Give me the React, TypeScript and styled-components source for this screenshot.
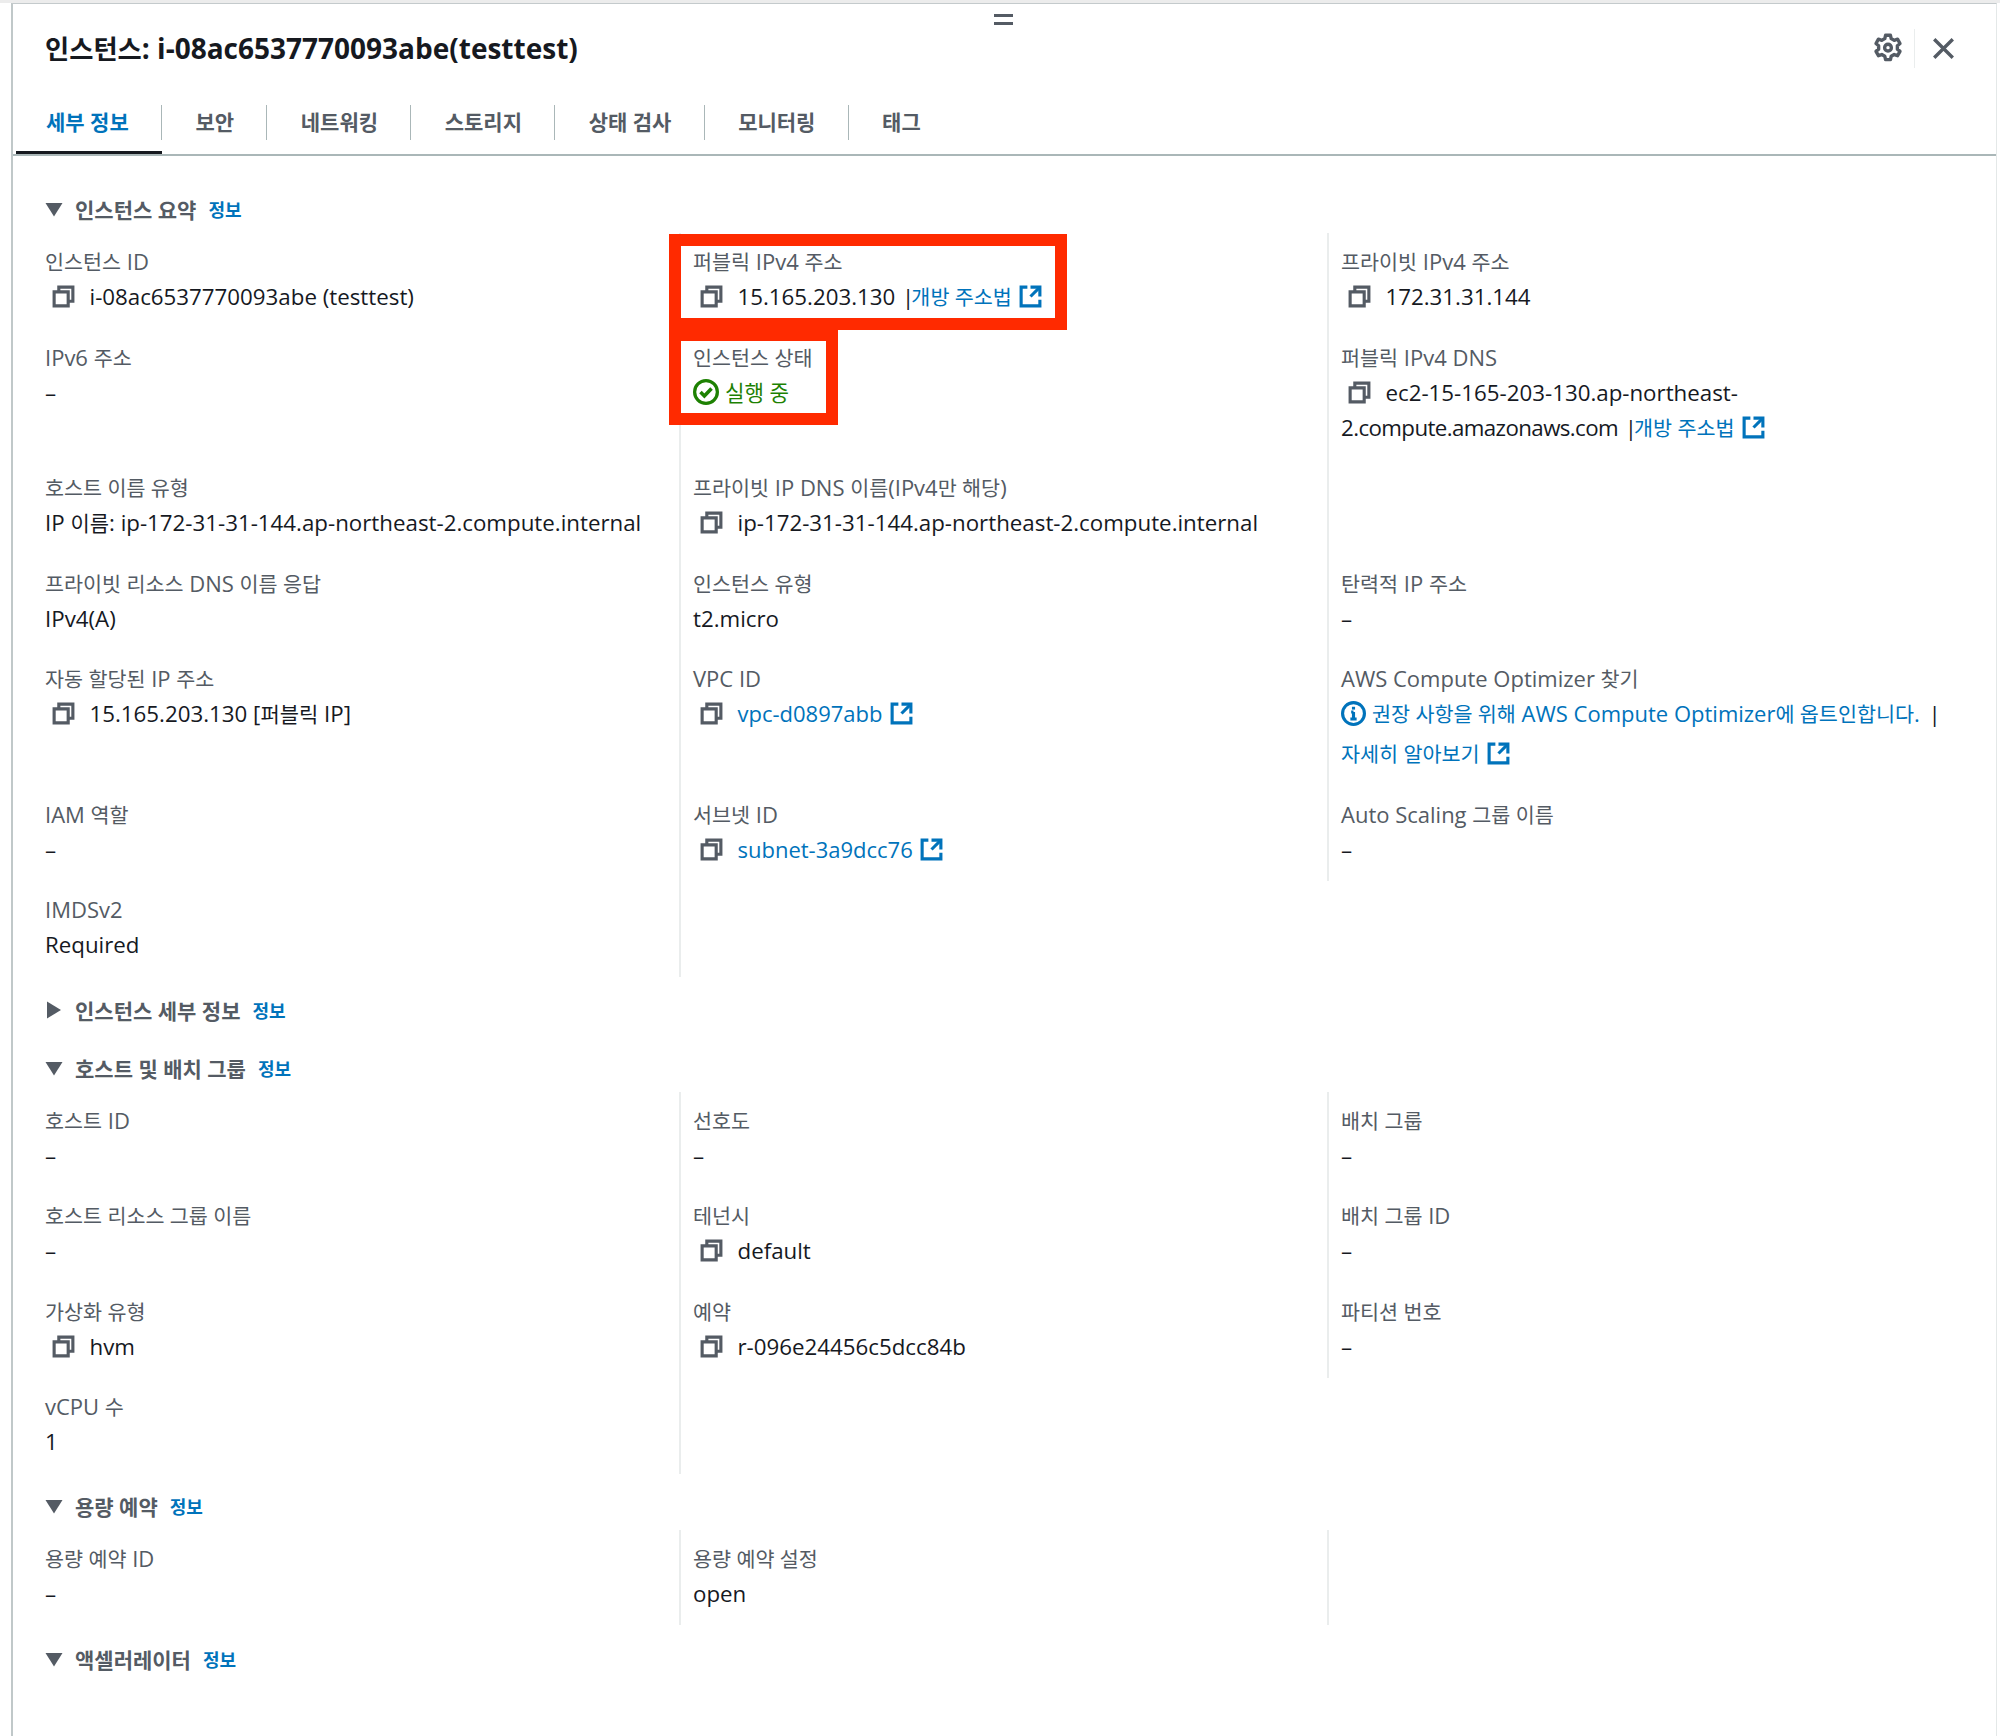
import React from 'react';
import styled, { createGlobalStyle } from 'styled-components';

const Global = createGlobalStyle`
  html, body { margin: 0; padding: 0; background: #fff; }
  body { font-family: "Open Sans", "Noto Sans CJK KR", sans-serif; color: #16191f; }
`;

const Page = styled.div`
  width: 2000px;
  height: 1736px;
  overflow: hidden;
  box-sizing: border-box;
  border-top: 3px solid #ececec;
  background: #fff;
`;
const Panel = styled.div`
  position: relative;
  margin: 0 3px 0 11px;
  height: 1733px;
  box-sizing: border-box;
  border-left: 2px solid #c0c8c9;
  border-right: 1px solid #e4e8e8;
  border-top: 1px solid #c4cacc;
  background: #fff;
`;
const DragHandle = styled.div`
  position: absolute;
  left: 981px;
  top: 10px;
  width: 19px;
  height: 11px;
  box-sizing: border-box;
  border-top: 3px solid #545b64;
  border-bottom: 3px solid #545b64;
`;
const Header = styled.header`
  display: flex;
  align-items: center;
  box-sizing: border-box;
  height: 89px;
  padding: 0 39px 1px 32px;
`;
const Title = styled.h1`
  flex: 1;
  margin: 0;
  font-size: 28px;
  font-weight: 700;
  color: #16191f;
`;
const HeaderActions = styled.div`
  display: flex;
  align-items: center;
`;
const GearButton = styled.div`
  display: flex;
  align-items: center;
  height: 39px;
  padding-right: 11px;
  border-right: 1px solid #eaeded;
`;
const CloseButton = styled.div`
  display: flex;
  margin-left: 15px;
`;
const Tabs = styled.nav`
  display: flex;
  height: 63px;
  box-sizing: border-box;
  border-bottom: 2px solid #aab7b8;
  padding-left: 3px;
`;
const Tab = styled.div<{ $active?: boolean; $last?: boolean }>`
  position: relative;
  display: flex;
  align-items: flex-start;
  box-sizing: border-box;
  padding: 14px 33.35px 0;
  font-size: 21px;
  font-weight: 700;
  line-height: 30px;
  color: ${p => (p.$active ? '#0073bb' : '#545b64')};
  border-bottom: 3px solid ${p => (p.$active ? '#16191f' : 'transparent')};
  &:first-child { padding-left: 30px; }
  &::after {
    content: '';
    display: ${p => (p.$last ? 'none' : 'block')};
    position: absolute;
    right: 0;
    top: 12px;
    width: 1px;
    height: 35px;
    background: #aab7b8;
  }
`;
const Body = styled.div`
  padding: 0 0 0 32px;
`;
const SectionHead = styled.div<{ $top: number; $bottom: number }>`
  display: flex;
  align-items: center;
  height: 30px;
  margin-top: ${p => p.$top}px;
  margin-bottom: ${p => p.$bottom}px;
`;
const Caret = styled.svg`
  width: 18px;
  height: 18px;
  margin-right: 12px;
  fill: #545b64;
  flex: none;
`;
const SectionTitle = styled.span`
  font-size: 21px;
  font-weight: 700;
  color: #545b64;
`;
const InfoLink = styled.a`
  margin-left: 12px;
  font-size: 18px;
  font-weight: 700;
  color: #0073bb;
`;
const Grid = styled.div`
  display: grid;
  grid-template-columns: 634px 648px 640px;
`;
const Cell = styled.div<{ $divider?: boolean }>`
  position: relative;
  box-sizing: border-box;
  padding: 11px 12px 14.5px ${p => (p.$divider ? '12px' : '0')};
  border-left: ${p => (p.$divider ? '2px solid #eaeded' : 'none')};
`;
const Label = styled.div`
  font-size: 22px;
  line-height: 35px;
  color: #545b64;
  white-space: nowrap;
`;
const Value = styled.div`
  font-size: 22.3px;
  line-height: 35px;
  color: #16191f;
`;
const Ko = styled.span`
  font-size: 0.94em;
  line-height: 1;
`;
const Tight = styled.span`
  letter-spacing: -0.6px;
`;
const CopyWrap = styled.span`
  display: inline-flex;
  align-items: center;
  height: 18px;
  vertical-align: -4px;
  margin: 0 13.5px 0 6px;
`;
const Link = styled.a`
  color: #0073bb;
  font-size: 22px;
  line-height: 1;
`;
const ExtWrap = styled.span`
  display: inline-flex;
  align-items: center;
  height: 18px;
  vertical-align: -4px;
  margin-left: 6px;
`;
const Pipe = styled.span`
  color: #16191f;
  margin: 0 -3px 0 1px;
`;
const Status = styled.div`
  display: flex;
  align-items: center;
  gap: 6px;
  color: #1d8102;
  font-size: 21.2px;
  line-height: 35px;
`;
const OptimizerLine = styled.div`
  & + & { margin-top: 5px; }
`;
const EndPipe = styled.span`
  margin-left: 2px;
`;
const InfoWrap = styled.span`
  display: inline-flex;
  align-items: center;
  height: 18px;
  vertical-align: -4px;
  margin-right: 6px;
`;
const Highlight = styled.div<{ $w: number; $h: number; $l: number; $t: number }>`
  position: absolute;
  box-sizing: border-box;
  width: ${p => p.$w}px;
  height: ${p => p.$h}px;
  left: ${p => p.$l}px;
  top: ${p => p.$t}px;
  border: 12px solid #ff2a00;
  pointer-events: none;
`;

const Mix = ({ children }: { children: string }) => (
  <>
    {children.split(/([가-힣]+(?: [가-힣]+)*)/).map((part, i) =>
      i % 2 === 1 ? <Ko key={i}>{part}</Ko> : <React.Fragment key={i}>{part}</React.Fragment>
    )}
  </>
);

const CopyIcon = () => (
  <CopyWrap>
    <svg width="25" height="25" viewBox="0 0 16 16" fill="none" stroke="#545b64" strokeWidth="2">
      <path d="M2 5h9v9H2z" />
      <path d="M5 5V2h9v9h-3" />
    </svg>
  </CopyWrap>
);
const ExtIcon = () => (
  <ExtWrap>
    <svg width="25" height="25" viewBox="0 0 16 16" fill="none" stroke="#0073bb" strokeWidth="2">
      <path d="M14 8V2H8" />
      <path d="M14 2 8 8" />
      <path d="M6 2H2v12h12V10" />
    </svg>
  </ExtWrap>
);
const StatusIcon = () => (
  <svg width="26" height="26" viewBox="0 0 16 16" fill="none" stroke="#1d8102" strokeWidth="2">
    <circle cx="8" cy="8" r="7" />
    <path d="M4.6 8 7 10.4 11.4 5.8" strokeWidth="2.2" />
  </svg>
);
const InfoIcon = () => (
  <InfoWrap>
    <svg width="25" height="25" viewBox="0 0 16 16" fill="none" stroke="#0073bb" strokeWidth="2">
      <circle cx="8" cy="8" r="7" />
      <path d="M8 7v4.5M6 11.500h4M6.500 7H8" />
      <path d="M7 4.600h2" strokeWidth="1.800" />
    </svg>
  </InfoWrap>
);
const Gear = () => (
  <svg width="30" height="30" viewBox="0 0 16 16" fill="none" stroke="#545b64" strokeWidth="1.800" strokeLinejoin="round">
    <path d="M6.700 1.200h2.600l.4 1.800 1.600.9 1.800-.6 1.300 2.300-1.400 1.200v1.800l1.400 1.200-1.300 2.300-1.800-.6-1.600.9-.4 1.800H6.700l-.4-1.800-1.600-.9-1.800.6-1.300-2.300 1.400-1.200V6.800L1.600 5.600l1.300-2.300 1.800.6 1.600-.9z" />
    <circle cx="8" cy="7.800" r="1.800" />
  </svg>
);
const Close = () => (
  <svg width="27" height="27" viewBox="0 0 16 16" fill="none" stroke="#545b64" strokeWidth="2">
    <path d="M2.500 2.500l11 11M13.500 2.500l-11 11" />
  </svg>
);
const Triangle = ({ open }: { open: boolean }) => (
  <Caret viewBox="0 0 18 18">{open ? <path d="M.5 3h17L9 16.500z" /> : <path d="M2 .5v17l14-8.500z" />}</Caret>
);

const Section = ({ title, open = true, top, bottom }: { title: string; open?: boolean; top: number; bottom: number }) => (
  <SectionHead $top={top} $bottom={bottom}>
    <Triangle open={open} />
    <SectionTitle>{title}</SectionTitle>
    <InfoLink>정보</InfoLink>
  </SectionHead>
);

const Field = ({ label, divider, children, overlay }: { label?: string; divider?: boolean; children?: React.ReactNode; overlay?: React.ReactNode }) => (
  <Cell $divider={divider}>
    {label && <Label><Mix>{label}</Mix></Label>}
    {children && <Value>{children}</Value>}
    {overlay}
  </Cell>
);

export default function App() {
  return (
    <Page>
      <Global />
      <Panel>
        <DragHandle />
        <Header>
          <Title><Mix>인스턴스: i-08ac6537770093abe(testtest)</Mix></Title>
          <HeaderActions>
            <GearButton><Gear /></GearButton>
            <CloseButton><Close /></CloseButton>
          </HeaderActions>
        </Header>
        <Tabs>
          <Tab $active>세부 정보</Tab>
          <Tab>보안</Tab>
          <Tab>네트워킹</Tab>
          <Tab>스토리지</Tab>
          <Tab>상태 검사</Tab>
          <Tab>모니터링</Tab>
          <Tab $last>태그</Tab>
        </Tabs>
        <Body>
          <Section title="인스턴스 요약" top={38} bottom={9} />
          <Grid>
            <Field label="인스턴스 ID"><CopyIcon />i-08ac6537770093abe (testtest)</Field>
            <Field divider label="퍼블릭 IPv4 주소" overlay={<Highlight $l={-12} $t={1} $w={398} $h={96} />}>
              <CopyIcon />15.165.203.130<Pipe> |</Pipe><Link><Mix>개방 주소법</Mix></Link><ExtIcon />
            </Field>
            <Field divider label="프라이빗 IPv4 주소"><CopyIcon />172.31.31.144</Field>

            <Field label="IPv6 주소">–</Field>
            <Field divider label="인스턴스 상태" overlay={<Highlight $l={-12} $t={0} $w={169} $h={96} />}>
              <Status><StatusIcon />실행 중</Status>
            </Field>
            <Field divider label="퍼블릭 IPv4 DNS">
              <CopyIcon />ec2-15-165-203-130.ap-northeast-<Tight>2.compute.amazonaws.com</Tight><Pipe> |</Pipe><Link><Mix>개방 주소법</Mix></Link><ExtIcon />
            </Field>

            <Field label="호스트 이름 유형"><Mix>IP 이름: ip-172-31-31-144.ap-northeast-2.compute.internal</Mix></Field>
            <Field divider label="프라이빗 IP DNS 이름(IPv4만 해당)"><CopyIcon />ip-172-31-31-144.ap-northeast-2.compute.internal</Field>
            <Field divider />

            <Field label="프라이빗 리소스 DNS 이름 응답">IPv4(A)</Field>
            <Field divider label="인스턴스 유형">t2.micro</Field>
            <Field divider label="탄력적 IP 주소">–</Field>

            <Field label="자동 할당된 IP 주소"><CopyIcon /><Mix>15.165.203.130 [퍼블릭 IP]</Mix></Field>
            <Field divider label="VPC ID"><CopyIcon /><Link>vpc-d0897abb</Link><ExtIcon /></Field>
            <Field divider label="AWS Compute Optimizer 찾기">
              <OptimizerLine>
                <InfoIcon /><Link><Mix>권장 사항을 위해 AWS Compute Optimizer에 옵트인합니다.</Mix></Link><EndPipe><Pipe> |</Pipe></EndPipe>
              </OptimizerLine>
              <OptimizerLine><Link><Mix>자세히 알아보기</Mix></Link><ExtIcon /></OptimizerLine>
            </Field>

            <Field label="IAM 역할">–</Field>
            <Field divider label="서브넷 ID"><CopyIcon /><Link>subnet-3a9dcc76</Link><ExtIcon /></Field>
            <Field divider label="Auto Scaling 그룹 이름">–</Field>

            <Field label="IMDSv2">Required</Field>
            <Field divider />
          </Grid>
          <Section title="인스턴스 세부 정보" open={false} top={18} bottom={28} />
          <Section title="호스트 및 배치 그룹" top={0} bottom={9} />
          <Grid>
            <Field label="호스트 ID">–</Field>
            <Field divider label="선호도">–</Field>
            <Field divider label="배치 그룹">–</Field>
            <Field label="호스트 리소스 그룹 이름">–</Field>
            <Field divider label="테넌시"><CopyIcon />default</Field>
            <Field divider label="배치 그룹 ID">–</Field>
            <Field label="가상화 유형"><CopyIcon />hvm</Field>
            <Field divider label="예약"><CopyIcon />r-096e24456c5dcc84b</Field>
            <Field divider label="파티션 번호">–</Field>
            <Field label="vCPU 수">1</Field>
            <Field divider />
          </Grid>
          <Section title="용량 예약" top={17} bottom={9} />
          <Grid>
            <Field label="용량 예약 ID">–</Field>
            <Field divider label="용량 예약 설정">open</Field>
            <Field divider />
          </Grid>
          <Section title="액셀러레이터" top={19} bottom={0} />
        </Body>
      </Panel>
    </Page>
  );
}
